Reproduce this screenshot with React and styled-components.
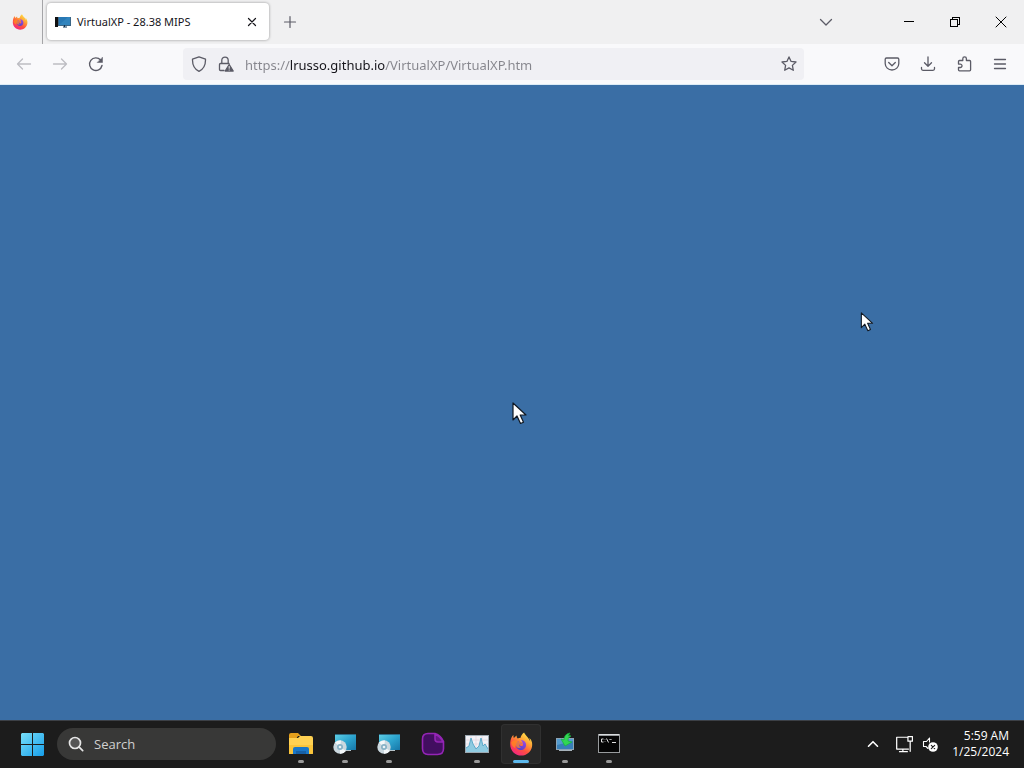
import React from 'react';
import styled, { createGlobalStyle } from 'styled-components';

const GlobalStyle = createGlobalStyle`
  * { box-sizing: border-box; }
  body { margin: 0; font-family: "Open Sans", "Noto Sans", sans-serif; }
  button, input { font: inherit; color: inherit; border: 0; padding: 0; margin: 0; background: none; }
  svg { display: block; flex: none; }
`;

const Screen = styled.div`
  display: flex;
  flex-direction: column;
  min-height: 100vh;
`;

const TabBar = styled.header`
  display: flex;
  height: 44px;
  background: #f0f0f1;
  color: #15141a;
`;

const FirefoxView = styled.button`
  display: grid;
  place-items: center;
  width: 43px;
  padding-right: 2px;
  border-right: 1px solid #a5a5a8;
`;

const Tab = styled.div`
  display: flex;
  align-items: center;
  gap: 6px;
  width: 222px;
  height: 37px;
  margin: 3px 0 0 4px;
  padding: 0 8px;
  border-radius: 4px;
  background: #fff;
  box-shadow: 0 0 3px rgba(0, 0, 0, 0.4);
  font-family: "Noto Sans", sans-serif;
  font-size: 11px;
`;

const TabTitle = styled.span`
  flex: 1;
  white-space: nowrap;
`;

const IconButton = styled.button`
  display: grid;
  place-items: center;
  width: ${(p) => p.$w || 36}px;
  height: ${(p) => p.$h || 40}px;
  color: ${(p) => p.$color || '#5b5b66'};
`;

const WindowControls = styled.div`
  display: flex;
  margin-left: auto;
`;

const TabListButton = styled(IconButton)`
  margin-right: 30px;
`;

const NavBar = styled.nav`
  display: flex;
  align-items: center;
  height: 41px;
  padding: 0 6px;
  background: #f9f9fb;
  border-bottom: 1px solid #dcebf5;
`;

const AddressBar = styled.div`
  flex: 1;
  display: flex;
  align-items: center;
  height: 32px;
  margin: 0 70px 0 69px;
  padding-left: 7px;
  border-radius: 4px;
  background: #f0f0f4;
`;

const AddressInput = styled.input`
  flex: 1;
  min-width: 0;
  height: 32px;
  margin-left: 1px;
  padding-top: 2px;
  font-family: "Noto Sans", sans-serif;
  font-size: 13px;
  outline: 0;
  color: transparent;
  caret-color: #15141a;
  background: linear-gradient(90deg, #85858c 45px, #15141a 45px 140px, #85858c 140px);
  -webkit-background-clip: text;
  background-clip: text;
`;

const Desktop = styled.main`
  position: relative;
  flex: 1;
  background: #3a6ea5;
`;

const Pointer = styled.svg`
  position: absolute;
  left: ${(p) => p.$x}%;
  top: ${(p) => p.$y}%;
`;

const Taskbar = styled.footer`
  display: flex;
  align-items: center;
  height: 48px;
  padding-left: 12px;
  box-shadow: inset 0 1px #3c4046;
  background: #1c1c1c;
  color: #fff;
`;

const SearchBox = styled.label`
  display: flex;
  align-items: center;
  gap: 10px;
  width: 219px;
  height: 32px;
  margin: 0 3px 0 5px;
  padding: 0 11px;
  border-radius: 16px;
  background: #383837;
`;

const SearchInput = styled.input`
  flex: 1;
  min-width: 0;
  font-size: 13px;
  outline: 0;
  &::placeholder { color: #d0d0d0; opacity: 1; }
`;

const AppCell = styled.button`
  position: relative;
  display: grid;
  place-items: center;
  width: 40px;
  height: 40px;
  margin: 0 2px;
  border-radius: 4px;
  background: ${(p) => (p.$active ? '#272727' : 'transparent')};
  box-shadow: ${(p) => (p.$active ? 'inset 0 0 0 1px #303030' : 'none')};
  &::after {
    content: "";
    position: absolute;
    bottom: 1px;
    left: 50%;
    transform: translateX(-50%);
    width: ${(p) => (p.$active ? 16 : 6)}px;
    height: 3px;
    border-radius: 2px;
    background: ${(p) => (p.$active ? '#5cb8ec' : '#9a9a9a')};
    display: ${(p) => (p.$running ? 'block' : 'none')};
  }
`;

const Tray = styled.div`
  display: flex;
  align-items: center;
  margin-left: auto;
  padding-right: 15px;
`;

const Clock = styled.time`
  margin-left: 10px;
  font-size: 12px;
  line-height: 16px;
  text-align: right;
`;

const Line = ({ size = 16, children, w = 1.3, ...rest }) => (
  <svg width={size} height={size} viewBox="0 0 16 16" fill="none" stroke="currentColor"
    strokeWidth={w} strokeLinecap="round" strokeLinejoin="round" aria-hidden="true" {...rest}>
    {children}
  </svg>
);

const Firefox = ({ size, id }) => (
  <svg width={size} height={size} viewBox="0 0 24 24" aria-hidden="true">
    <defs>
      <linearGradient id={`${id}f`} x1="0.85" y1="0" x2="0.2" y2="1">
        <stop offset="0" stopColor="#fff44f" />
        <stop offset="0.35" stopColor="#ffa436" />
        <stop offset="0.65" stopColor="#ff4f3f" />
        <stop offset="1" stopColor="#f0208a" />
      </linearGradient>
      <linearGradient id={`${id}p`} x1="0.7" y1="0" x2="0.3" y2="1">
        <stop offset="0" stopColor="#a04be0" />
        <stop offset="1" stopColor="#5440c8" />
      </linearGradient>
    </defs>
    <path fill={`url(#${id}f)`} d="M22.6 9.2c-.5-1.3-1.6-2.7-2.4-3.1.6 1.2 1 2.4 1.1 3.3C19.9 5.9 17.5 4.7 15.6 1.5 15.4 1.2 15.2.8 15.1.4c-2.3 1.4-3.3 3.9-3.5 5.3-1.1.1-2 .4-2.9.8-.9-.7-1.2-1.6-1-2.9-1.2.6-2.1 1.6-2.8 2.5-.5-.6-.5-2.4-.4-3C3 3.9 1.2 7.4 1.2 12.4 1.2 18.6 6.2 23.5 12.3 23.5c5.4 0 9.8-3.8 10.7-8.8.3-1.7.3-3.8-.4-5.5z" />
    <path fill={`url(#${id}p)`} d="M11.8 8c3.2 0 5.3 2.2 5.3 5 0 2.9-2.4 5-5.1 5s-5-1.9-5-4.8c0-1.9 1-3.4 2.2-4.1.2.9.7 1.3 1.5 1.5.7.2 1.9 0 2.6.2-.8 1.3-2 1.3-2.8 1.9.5 1.4 2.3 1.9 3.3.8.3-2.2-.5-4.2-2-5.5z" />
    <path fill="#ff8a20" d="M2.2 10.6C4 8.3 6.7 8.1 8.5 9.2c1 1.1 2.8.8 4.7 1.2-.4 1.2-2 1.4-2.9 2.3-.4 1.3.5 2.6 1.9 2.5-2.5 1.6-5 .4-5.5-2-.8.9-.4 2.2-.2 3-2.9-1-4.1-3.2-4.3-5.6z" opacity=".75" />
  </svg>
);

const TabIcon = () => (
  <svg width="16" height="12" viewBox="0 0 16 12" aria-hidden="true">
    <rect x="0" y="1" width="3" height="10" fill="#111" />
    <rect x="3" y="1" width="13" height="9" fill="#3a6686" />
    <rect x="4" y="1" width="11" height="8" fill="#2878b4" />
    <path d="M4 9 13 1h2v8z" fill="#3284bd" />
    <path d="M9.5 9v2M8 11h4" stroke="#0e3252" />
  </svg>
);

const Explorer = () => (
  <svg width="26" height="24" viewBox="0 0 26 24" aria-hidden="true">
    <path d="M1 3Q1 1 3 1h7l3 3h-3L8 7H1z" fill="#e5a01c" />
    <path d="M1 6h9l2-2h11q2 0 2 2v15q0 1-1 1H1z" fill="#ffd152" />
    <path d="M1 13h24v8q0 1-1 1H1z" fill="#fac43a" />
    <path d="M5 22v-5q0-2 2-2h12q2 0 2 2v5z" fill="#1977c8" />
    <path d="M8 22v-3h10v3z" fill="#1660a6" />
  </svg>
);

const Installer = ({ id }) => (
  <svg width="26" height="24" viewBox="0 0 26 24" aria-hidden="true">
    <linearGradient id={id} x1="0" y1="0" x2="1" y2="1">
      <stop offset="0" stopColor="#61cfe4" /><stop offset=".5" stopColor="#2da5cf" /><stop offset="1" stopColor="#1676a8" />
    </linearGradient>
    <rect x="3" y="2" width="21" height="16" fill={`url(#${id})`} />
    <path d="M3 2.5h21" stroke="#2c6b86" />
    <path d="M11 18h8v1h-8z" fill="#b8c4ca" />
    <circle cx="8" cy="15" r="6.7" fill="#cbd8df" />
    <path d="M8 15 3 10.500a7 7 0 0 1 6-2zM8 15l6 4a7 7 0 0 1-6 2.700z" fill="#f3f7f9" />
    <circle cx="8" cy="15" r="3" fill="#86b1c5" />
    <circle cx="8" cy="15" r="1.3" fill="#edf3f6" />
  </svg>
);

const PurpleFile = () => (
  <svg width="24" height="24" viewBox="0 0 24 24" fill="#420e60" stroke="#9425b5" strokeWidth="1.6" strokeLinejoin="round" aria-hidden="true">
    <path d="M7 1.5h7q6 2 8.500 8v7q0 6-6 6H7q-5.500 0-5.500-6V7Q1.500 1.500 7 1.500z" />
    <path d="M14 2v5q0 3 3 3h5q-2-5-8-8z" fill="#641783" />
  </svg>
);

const Monitor = () => (
  <svg width="26" height="24" viewBox="0 0 26 24" aria-hidden="true">
    <rect x="1" y="3" width="24" height="18" fill="#9da9b2" />
    <rect x="2" y="4" width="22" height="16" fill="#f2f2f7" />
    <path d="M2 8h22M2 12h22M2 16h22M7 4v16M12 4v16M18 4v16" stroke="#e3cdd7" strokeWidth=".6" />
    <path d="M2 20v-4l3-2 2-8 2 6 3 5 3-3 2-8 2 8 2-2 3 5v3z" fill="#8fcbe1" />
    <path d="M2 16l3-2 2-8 2 6 3 5 3-3 2-8 2 8 2-2 3 5" fill="none" stroke="#5eaaca" />
  </svg>
);

const NetworkDrop = () => (
  <svg width="24" height="24" viewBox="0 0 24 24" aria-hidden="true">
    <rect x="3" y="6" width="18" height="12" fill="#8ca4b6" />
    <rect x="4" y="7" width="16" height="10" fill="#539bcf" />
    <path d="M4 13 20 9v8H4z" fill="#387fb8" />
    <path d="M6 18h13v1H6z" fill="#a7b3bb" />
    <path d="M17 1q-6 1-6 7L8 7l4 7 7-4-4-1q-1-3 3-5-2-1-3 0z" fill="#31d753" stroke="#18b13d" strokeWidth=".7" />
  </svg>
);

const Terminal = () => (
  <svg width="24" height="24" viewBox="0 0 24 24" aria-hidden="true">
    <rect x="1" y="2" width="22" height="19" fill="#989b9d" />
    <rect x="2" y="4" width="20" height="16" fill="#050505" />
    <path d="M2 2.5h20" stroke="#d9dcde" />
    <path d="M6.500 7H4.500v3h2M8 7.500v.5M8 9.500v.5M9.500 6.500l2 4M12.500 7l1 1 1-1M15 10.500h4" fill="none" stroke="#dedede" />
  </svg>
);

const apps = [
  { name: 'File Explorer', icon: <Explorer />, running: true },
  { name: 'Setup', icon: <Installer id="disc1" />, running: true },
  { name: 'Setup 2', icon: <Installer id="disc2" />, running: true },
  { name: 'Notes', icon: <PurpleFile />, running: false },
  { name: 'Performance', icon: <Monitor />, running: true },
  { name: 'Firefox', icon: <Firefox size={24} id="task" />, running: true, active: true },
  { name: 'Network transfer', icon: <NetworkDrop />, running: true },
  { name: 'Command Prompt', icon: <Terminal />, running: true },
];

const Cursor = ({ x, y, width, height }) => (
  <Pointer $x={x} $y={y} width={width} height={height} viewBox="0 0 15 23" aria-hidden="true">
    <path d="M1 1v17l4-4 3.500 7.500 3-1.300L8.200 13H14z" fill="#fff" stroke="#101822" strokeWidth="1.2" strokeLinejoin="round" />
  </Pointer>
);

export default function App() {
  return (
    <Screen>
      <GlobalStyle />
      <TabBar>
        <FirefoxView aria-label="Firefox View"><Firefox size={16} id="view" /></FirefoxView>
        <Tab>
          <TabIcon />
          <TabTitle>VirtualXP - 28.38 MIPS</TabTitle>
          <IconButton $w={18} $h={24} $color="#15141a" aria-label="Close tab">
            <Line w={1.2}><path d="M4.500 4.500l7 7M11.500 4.500l-7 7" /></Line>
          </IconButton>
        </Tab>
        <IconButton $w={42} $h={44} aria-label="New tab">
          <Line w={1.2}><path d="M8 2.500v11M2.500 8h11" /></Line>
        </IconButton>
        <WindowControls>
          <TabListButton $w={60} $h={43} aria-label="List all tabs">
            <Line w={1.3}><path d="M2.500 5.500 8 11l5.500-5.500" /></Line>
          </TabListButton>
          <IconButton $w={46} $h={43} $color="#000" aria-label="Minimize">
            <Line w={1} shapeRendering="crispEdges"><path d="M3 7.500h10" /></Line>
          </IconButton>
          <IconButton $w={46} $h={43} $color="#000" aria-label="Restore">
            <Line w={1} strokeLinejoin="miter" shapeRendering="crispEdges"><path d="M3.500 5.500h7v7h-7zM5.500 5.500v-2h7v7h-2" /></Line>
          </IconButton>
          <IconButton $w={46} $h={44} $color="#000" aria-label="Close">
            <Line w={1}><path d="M3 3l10 10M13 3 3 13" /></Line>
          </IconButton>
        </WindowControls>
      </TabBar>
      <NavBar>
        <IconButton $color="#bdbdc2" aria-label="Back">
          <Line><path d="M14.500 8h-13M6.500 3l-5 5 5 5" /></Line>
        </IconButton>
        <IconButton $color="#bdbdc2" aria-label="Forward">
          <Line><path d="M1.500 8h13M9.500 3l5 5-5 5" /></Line>
        </IconButton>
        <IconButton aria-label="Reload">
          <Line w={1.4}><path d="M14 9.500A6.300 6.300 0 1 1 12.600 4" /><path d="M14.500 1.500v5h-5z" fill="currentColor" strokeWidth=".5" /></Line>
        </IconButton>
        <AddressBar>
          <IconButton $w={18} $h={32} aria-label="Tracking protection">
            <Line><path d="M8 .8 14.500 3.200c.2 6-1.900 9.800-6.500 12.100C3.400 13 1.300 9.200 1.500 3.200z" /></Line>
          </IconButton>
          <IconButton $w={36} $h={32} aria-label="Connection not secure">
            <Line>
              <path d="M6 14.500H2.500q-1 0-1-1v-5q0-1 1-1h8.500M3.800 7.500V4.300a3.200 3.200 0 0 1 6.400 0v3.200" />
              <path d="M11.200 8.500l4 6.500h-8z" fill="currentColor" />
              <path d="M11.200 10.500v1.800M11.200 14v.1" stroke="#f0f0f4" strokeWidth="1" />
            </Line>
          </IconButton>
          <AddressInput aria-label="Address" defaultValue="https://lrusso.github.io/VirtualXP/VirtualXP.htm" />
          <IconButton $w={30} $h={32} aria-label="Bookmark this page">
            <Line><path d="M8 .9l2.100 4.500 4.900.600-3.600 3.400.9 4.900L8 11.900l-4.300 2.400.9-4.900L1 6l4.900-.6z" /></Line>
          </IconButton>
        </AddressBar>
        <IconButton aria-label="Save to Pocket">
          <Line><path d="M2.500 2h11q1.300 0 1.300 1.300v4.200a6.800 6.500 0 0 1-13.600 0V3.300Q1.200 2 2.500 2zM4.700 6.500 8 9.700l3.300-3.200" /></Line>
        </IconButton>
        <IconButton aria-label="Downloads">
          <Line><path d="M8 1v9M4.500 6.800 8 10.300l3.500-3.500M1.500 11.500v1.300q0 1.500 1.500 1.500h10q1.500 0 1.500-1.500v-1.300" /></Line>
        </IconButton>
        <IconButton aria-label="Extensions">
          <Line><path d="M2.500 7.300V5.500q0-1 1-1h3.300V2.700a1.800 1.800 0 0 1 3.600 0v1.800h3.200q1 0 1 1v8.300q0 1-1 1H3.500q-1 0-1-1v-2.300h1.800a1.700 1.700 0 0 0 0-3.400H2.500z" /></Line>
        </IconButton>
        <IconButton aria-label="Open menu">
          <Line><path d="M2.500 3.500h11M2.500 8h11M2.500 12.500h11" /></Line>
        </IconButton>
      </NavBar>
      <Desktop>
        <Cursor x={50} y={49.9} width={15} height={23} />
        <Cursor x={84} y={35.7} width={14} height={20} />
      </Desktop>
      <Taskbar>
        <IconButton $w={40} $h={40} aria-label="Start">
          <svg width="24" height="24" viewBox="0 0 24 24" aria-hidden="true">
            <linearGradient id="start" x1="0" y1="0" x2="1" y2="1">
              <stop offset="0" stopColor="#78e0fa" /><stop offset="1" stopColor="#169de9" />
            </linearGradient>
            <path fill="url(#start)" d="M2 1h10v11H1V2zM13 1h10l1 1v10H13zM1 13h11v11H2l-1-1zM13 13h11v10l-1 1H13z" />
          </svg>
        </IconButton>
        <SearchBox>
          <Line w={1.7} color="#e6e6e6"><circle cx="7" cy="7" r="5.5" fill="#555" /><path d="M11.200 11.200l3.500 3.500" /></Line>
          <SearchInput type="text" placeholder="Search" aria-label="Search" />
        </SearchBox>
        {apps.map((app) => (
          <AppCell key={app.name} $running={app.running} $active={app.active} aria-label={app.name}>{app.icon}</AppCell>
        ))}
        <Tray>
          <IconButton $w={36} $color="#fff" aria-label="Show hidden icons">
            <Line w={1.6}><path d="M3.500 10.200 8 5.700l4.500 4.500" /></Line>
          </IconButton>
          <IconButton $w={26} $color="#fff" aria-label="Network">
            <Line size={18} w={1.1}><path d="M10.500 2H1.500v10.500H12M4 14.800h7M7 12.500v2M11.500 1.500h4v4h-4zM13.500 5.500v9" /></Line>
          </IconButton>
          <IconButton $w={25} $color="#fff" aria-label="Volume muted">
            <Line size={16} w={1.1}>
              <path d="M7.500 2v4M7.500 2 4.500 5.500H1.500v5h2.500l2 2" />
              <circle cx="11" cy="11" r="4.8" fill="#fff" stroke="none" />
              <path d="M9.300 9.300l3.400 3.400M12.700 9.300l-3.400 3.400" stroke="#1c1c1c" />
            </Line>
          </IconButton>
          <Clock dateTime="2024-01-25T05:59">5:59 AM<br />1/25/2024</Clock>
        </Tray>
      </Taskbar>
    </Screen>
  );
}
